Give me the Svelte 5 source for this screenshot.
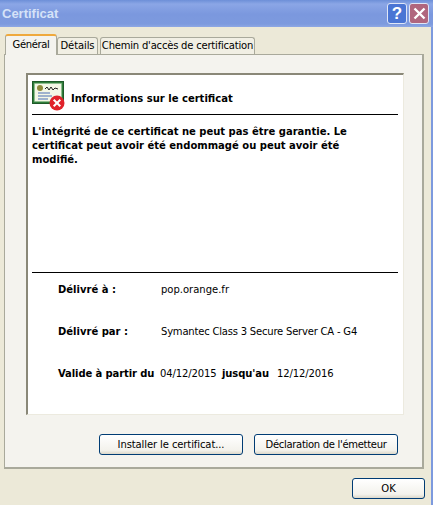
<script>
    const rows = [
        { label: "Délivré à :", value: "pop.orange.fr" },
        { label: "Délivré par :", value: "Symantec Class 3 Secure Server CA - G4", tight: true },
    ];
</script>

<div class="window">
    <div class="titlebar">
        <span class="title">Certificat</span>
        <div class="controls">
            <button class="ctl help">?</button>
            <button class="ctl close" aria-label="Fermer">
                <svg width="15" height="15" viewBox="0 0 15 15">
                    <path d="M2.5 2.5L12.5 12.5M12.5 2.5L2.5 12.5" stroke="#fff" stroke-width="2.4" />
                </svg>
            </button>
        </div>
    </div>
    <div class="body">
        <div class="tabs">
            <div class="tab active">Général</div>
            <div class="tab details">Détails</div>
            <div class="tab chemin">Chemin d'accès de certification</div>
        </div>
        <div class="panel">
            <div class="box">
                <div class="head">
                    <svg class="icon" width="33" height="30" viewBox="0 0 33 30">
                        <rect x="0.5" y="0.5" width="31" height="22" fill="#2f7d3a" stroke="#1e5a28" />
                        <rect x="2.5" y="2.5" width="27" height="18" fill="#f4f7e6" stroke="#8fbf8f" stroke-dasharray="2 1" />
                        <circle cx="8" cy="7" r="3" fill="#8d8a3a" />
                        <path d="M13 8l2-2 2 3 2-3 2 3 2-2 3 1" fill="none" stroke="#222" stroke-width="1" />
                        <path d="M6 12h12M6 15h14M6 18h10" stroke="#4a6fb5" stroke-width="1" />
                        <circle cx="25" cy="22" r="7.5" fill="#e0222a" />
                        <path d="M21.7 18.7l6.6 6.6M28.3 18.7l-6.6 6.6" stroke="#fff" stroke-width="2" />
                    </svg>
                    <span class="heading">Informations sur le certificat</span>
                </div>
                <p class="warning">
                    L'intégrité de ce certificat ne peut pas être garantie. Le<br />
                    certificat peut avoir été endommagé ou peut avoir été<br />
                    modifié.
                </p>
                <div class="info">
                    {#each rows as r}
                        <div class="row">
                            <b class="label">{r.label}</b>
                            <span class:tight={r.tight}>{r.value}</span>
                        </div>
                    {/each}
                    <div class="row dates">
                        <b class="from">Valide à partir du</b>
                        <span class="d1 num">04/12/2015</span>
                        <b class="to">jusqu'au</b>
                        <span class="num">12/12/2016</span>
                    </div>
                </div>
            </div>
            <div class="actions">
                <button class="btn wide install">Installer le certificat...</button>
                <button class="btn wide decl">Déclaration de l'émetteur</button>
            </div>
        </div>
        <div class="footer">
            <button class="btn ok">OK</button>
        </div>
    </div>
</div>

<style>
    :global(body) {
        margin: 0;
        background: #ece9d8;
    }
    .window {
        width: 433px;
        height: 505px;
        overflow: hidden;
        display: flex;
        flex-direction: column;
        font-family: "DejaVu Sans", Verdana, sans-serif;
        font-size: 10px;
        color: #000;
    }
    .titlebar {
        height: 27px;
        flex: none;
        display: flex;
        align-items: center;
        justify-content: space-between;
        padding: 0 4px 0 2px;
        background: linear-gradient(to bottom, #6d8fd8 0, #8ba6e6 4px, #7b98de 14px, #7d9ade 24px, #8ea8e4 27px);
    }
    .title {
        font-family: "Liberation Sans", Arial, sans-serif;
        font-weight: bold;
        font-size: 13px;
        color: #d5e2f8;
    }
    .controls {
        display: flex;
        gap: 2px;
        margin-top: -1px;
    }
    .ctl {
        width: 20px;
        height: 21px;
        padding: 0;
        border: 1px solid #dfe6f7;
        border-radius: 3px;
        color: #fff;
        font-family: "Liberation Sans", sans-serif;
        font-weight: bold;
        font-size: 17px;
        line-height: 19px;
        display: flex;
        align-items: center;
        justify-content: center;
    }
    .help {
        background: #4a75d4;
    }
    .close {
        background: #b0667e;
    }
    .body {
        flex: 1;
        background: #ece9d8;
        padding: 7px 7px 0 4px;
        border-right: 2px solid #7d9ade;
        display: flex;
        flex-direction: column;
    }
    .tabs {
        display: flex;
        height: 20px;
        align-items: flex-end;
        padding-left: 1px;
        position: relative;
        z-index: 1;
    }
    .tab {
        box-sizing: border-box;
        height: 17px;
        line-height: 16px;
        text-align: center;
        background: #f1efe4;
        border: 1px solid #a9a99b;
        border-bottom: 0;
        border-radius: 3px 3px 0 0;
        white-space: nowrap;
    }
    .active {
        width: 52px;
        height: 21px;
        line-height: 18px;
        margin-bottom: -1px;
        background: #f4f3ee;
        border-color: #a9a99b;
        border-top: 2px solid #efa93c;
        letter-spacing: -0.35px;
    }
    .details {
        width: 41px;
        margin-right: 2px;
        letter-spacing: -0.1px;
    }
    .chemin {
        width: 155px;
        letter-spacing: -0.2px;
    }
    .panel {
        box-sizing: border-box;
        height: 415px;
        background: #f4f3ee;
        border: 1px solid #a9a99b;
        border-right-width: 2px;
        border-bottom-width: 2px;
        padding: 18px 18px 0 21px;
    }
    .box {
        box-sizing: border-box;
        height: 342px;
        background: #fff;
        border: 2px solid #8a8878;
        border-right: 1px solid #eceadf;
        border-bottom: 1px solid #eceadf;
        padding: 5px 5px 0 4px;
    }
    .head {
        display: flex;
        align-items: flex-end;
        gap: 6px;
        height: 34px;
        border-bottom: 1px solid #000;
    }
    .icon {
        margin-bottom: 3px;
    }
    .heading {
        font-weight: bold;
        margin-bottom: 10px;
    }
    .warning {
        margin: 10px 0 0;
        height: 147px;
        font-weight: bold;
        line-height: 14px;
        border-bottom: 1px solid #000;
    }
    .info {
        padding: 10px 0 0 26px;
    }
    .row {
        display: flex;
        height: 42px;
        line-height: 14px;
    }
    .label {
        width: 103px;
    }
    .tight {
        letter-spacing: -0.2px;
    }
    .dates b.from {
        width: 102px;
        white-space: nowrap;
        letter-spacing: -0.1px;
    }
    .dates span {
        white-space: nowrap;
    }
    .num {
        letter-spacing: -0.1px;
    }
    .d1 {
        width: 62px;
    }
    .to {
        width: 55px;
        letter-spacing: -0.1px;
    }
    .actions {
        display: flex;
        justify-content: flex-end;
        gap: 11px;
        margin-top: 19px;
        padding-right: 6px;
    }
    .btn {
        box-sizing: border-box;
        height: 21px;
        padding: 0;
        border: 1px solid #003c74;
        border-radius: 3px;
        background: linear-gradient(to bottom, #fff, #f3f2ec 80%, #dcd8ca);
        font-family: inherit;
        font-size: 10px;
        color: #000;
    }
    .wide {
        width: 144px;
    }
    .install {
        letter-spacing: -0.1px;
    }
    .decl {
        letter-spacing: -0.3px;
    }
    .footer {
        display: flex;
        justify-content: flex-end;
        padding-top: 9px;
        margin-right: -1px;
    }
    .ok {
        width: 73px;
    }
</style>
